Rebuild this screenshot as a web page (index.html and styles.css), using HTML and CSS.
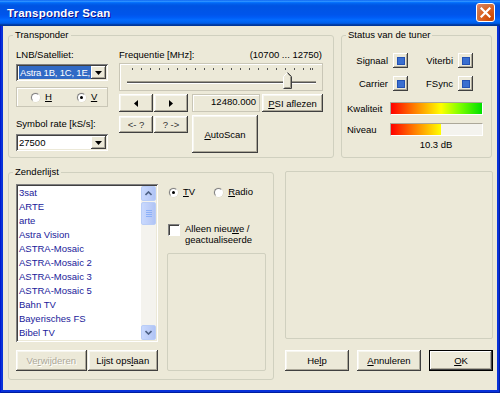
FILE: index.html
```html
<!DOCTYPE html>
<html lang="nl">
<head>
  <meta charset="UTF-8" />
  <title>Transponder Scan</title>
  <link rel="stylesheet" href="styles.css">
</head>
<body>
  <div class="window">
    <div class="titlebar">
      <span class="title">Transponder Scan</span>
      <span class="close">
        <svg width="11" height="11" viewBox="0 0 11 11"><path d="M1.5 1.5 L9.5 9.5 M9.5 1.5 L1.5 9.5" stroke="#fff" stroke-width="2.2" stroke-linecap="square"/></svg>
      </span>
    </div>

    <div class="client">
      <div class="row-top">
        <fieldset class="group transponder">
          <legend>Transponder</legend>
          <div class="tp-inner">
            <div class="tp-left">
              <div class="lbl">LNB/Satelliet:</div>
              <div class="combo combo-lnb">
                <span class="combo-text"><span class="sel">Astra 1B, 1C, 1E,</span></span>
                <span class="combo-btn"><svg width="7" height="4" viewBox="0 0 7 4"><path d="M0 0 H7 L3.5 4 Z" fill="#000"/></svg></span>
              </div>
              <div class="pol-frame">
                <span class="radio"><span class="dot-box"></span><span><u>H</u></span></span>
                <span class="radio"><span class="dot-box on"></span><span><u>V</u></span></span>
              </div>
              <div class="lbl lbl-sr">Symbol rate [kS/s]:</div>
              <div class="combo combo-sr">
                <span class="combo-text">27500</span>
                <span class="combo-btn"><svg width="7" height="4" viewBox="0 0 7 4"><path d="M0 0 H7 L3.5 4 Z" fill="#000"/></svg></span>
              </div>
            </div>

            <div class="tp-right">
              <div class="freq-head">
                <span>Frequentie [MHz]:</span>
                <span>(10700 ... 12750)</span>
              </div>
              <div class="trackbar">
                <svg width="202" height="26" viewBox="0 0 202 26">
                  <g stroke="#555" stroke-width="1">
                    <path d="M12.5 4v2 M21.5 4v2 M30.5 4v2 M39.5 4v2 M48.5 4v2 M57.5 4v2 M66.5 4v2 M75.5 4v2 M84.5 4v2 M93.5 4v2 M102.5 4v2 M111.5 4v2 M120.5 4v2 M129.5 4v2 M138.5 4v2 M147.5 4v2 M156.5 4v2 M165.5 4v2 M174.5 4v2 M183.5 4v2 M190.5 4v2 M192.5 4v2"/>
                  </g>
                  <rect x="7" y="17" width="189" height="1" fill="#9d9a8b"/>
                  <rect x="7" y="18" width="189" height="1" fill="#555"/>
                  <rect x="7" y="19" width="189" height="1" fill="#ffffff"/>
                  <path d="M163.5 24.5 V12.5 L167.5 8.5 L171.5 12.5 V24.5 Z" fill="#ece9d8" stroke="#fff"/>
                  <path d="M167.5 8.5 L171.5 12.5 V24.5 H163.5" fill="none" stroke="#404040"/>
                  <path d="M167.5 9.5 L170.5 12.5 V23.5 H164.5" fill="none" stroke="#9d9a8b"/>
                </svg>
              </div>
              <div class="freq-row">
                <button class="btn btn-step"><svg width="4" height="7" viewBox="0 0 4 7"><path d="M4 0 V7 L0 3.5 Z" fill="#000"/></svg></button>
                <button class="btn btn-step"><svg width="4" height="7" viewBox="0 0 4 7"><path d="M0 0 V7 L4 3.5 Z" fill="#000"/></svg></button>
                <div class="freq-value">12480.000</div>
                <button class="btn btn-psi"><span><u>P</u>SI aflezen</span></button>
              </div>
              <div class="scan-row">
                <div class="seek">
                  <button class="btn btn-seek">&lt;- ?</button>
                  <button class="btn btn-seek">? -&gt;</button>
                </div>
                <button class="btn btn-auto"><span><u>A</u>utoScan</span></button>
              </div>
            </div>
          </div>
        </fieldset>

        <fieldset class="group status">
          <legend>Status van de tuner</legend>
          <div class="st-inner">
            <div class="leds">
              <div class="led-cell">Signaal <span class="led"><span class="led-on"></span></span></div>
              <div class="led-cell">Viterbi <span class="led"><span class="led-on"></span></span></div>
              <div class="led-cell">Carrier <span class="led"><span class="led-on"></span></span></div>
              <div class="led-cell">FSync <span class="led"><span class="led-on"></span></span></div>
            </div>
            <div class="meter">
              <span class="meter-lbl">Kwaliteit</span>
              <span class="bar"><span class="bar-fill" style="width: 100%"></span></span>
            </div>
            <div class="meter">
              <span class="meter-lbl">Niveau</span>
              <span class="bar"><span class="bar-fill" style="width: 55%"></span></span>
            </div>
            <div class="db">10.3 dB</div>
          </div>
        </fieldset>
      </div>

      <div class="row-bottom">
        <fieldset class="group zender">
          <legend>Zenderlijst</legend>
          <div class="zl-inner">
            <div class="zl-left">
              <div class="listbox">
                <ul class="items">
                  <li>3sat</li>
                  <li>ARTE</li>
                  <li>arte</li>
                  <li>Astra Vision</li>
                  <li>ASTRA-Mosaic</li>
                  <li>ASTRA-Mosaic 2</li>
                  <li>ASTRA-Mosaic 3</li>
                  <li>ASTRA-Mosaic 5</li>
                  <li>Bahn TV</li>
                  <li>Bayerisches FS</li>
                  <li>Bibel TV</li>
                </ul>
                <div class="vscroll">
                  <span class="sb-btn">
                    <svg width="7" height="5" viewBox="0 0 7 5"><path d="M0.5 4 L3.5 1 L6.5 4" fill="none" stroke="#4d6185" stroke-width="1.6"/></svg>
                  </span>
                  <span class="sb-thumb">
                    <svg width="6" height="7" viewBox="0 0 6 7"><path d="M0 0.5h6 M0 2.5h6 M0 4.5h6 M0 6.5h6" stroke="#8cb0f8"/></svg>
                  </span>
                  <span class="sb-track"></span>
                  <span class="sb-btn">
                    <svg width="7" height="5" viewBox="0 0 7 5"><path d="M0.5 1 L3.5 4 L6.5 1" fill="none" stroke="#4d6185" stroke-width="1.6"/></svg>
                  </span>
                </div>
              </div>
              <div class="zl-buttons">
                <button class="btn btn-list" disabled><span>Ve<u>r</u>wijderen</span></button>
                <button class="btn btn-list"><span>Lijst ops<u>l</u>aan</span></button>
              </div>
            </div>

            <div class="zl-right">
              <div class="type-row">
                <span class="radio"><span class="dot-box on"></span><span><u>T</u>V</span></span>
                <span class="radio"><span class="dot-box"></span><span><u>R</u>adio</span></span>
              </div>
              <div class="check-row">
                <span class="check"></span>
                <span class="check-lbl">Alleen nieu<u>w</u>e /<br>geactualiseerde</span>
              </div>
              <div class="etched zl-frame"></div>
            </div>
          </div>
        </fieldset>

        <div class="side">
          <div class="etched side-frame"></div>
          <div class="dlg-buttons">
            <button class="btn btn-dlg"><span>He<u>l</u>p</span></button>
            <button class="btn btn-dlg"><span><u>A</u>nnuleren</span></button>
            <button class="btn btn-dlg btn-default"><span><u>O</u>K</span></button>
          </div>
        </div>
      </div>
    </div>
  </div>
</body>
</html>
```

FILE: styles.css
```css
* {
  box-sizing: border-box;
}

body {
  margin: 0;
  width: 500px;
  height: 393px;
  overflow: hidden;
  font-family: "Liberation Sans", Arial, sans-serif;
  font-size: 9.5px;
  color: #000;
  background: #0831d9;
}

.window {
  width: 500px;
  height: 393px;
  display: flex;
  flex-direction: column;
  background: #0831d9;
  box-shadow: inset 1px 0 #0019cf, inset -1px 0 #001ea0, inset 0 -1px #001ea0;
  padding: 0 3px 3px 3px;
}

/* title bar */
.titlebar {
  height: 26px;
  margin: 0 -3px;
  display: flex;
  align-items: center;
  justify-content: space-between;
  padding: 0 5px 1px 7px;
  background: linear-gradient(to bottom, #0058ee 0%, #3593ff 4%, #288eff 6%, #127dff 8%, #036ffc 10%, #0262ee 14%, #0057e5 20%, #0054e3 24%, #0055eb 56%, #005bf5 66%, #026afe 76%, #0062ef 86%, #0052d6 92%, #0040ab 94%, #003092 100%);
}

.title {
  color: #fff;
  font-weight: bold;
  font-size: 11.5px;
  letter-spacing: 0.2px;
  text-shadow: 1px 1px #0f1089;
}

.close {
  width: 19px;
  height: 19px;
  border: 1px solid #fff;
  border-radius: 3px;
  display: flex;
  align-items: center;
  justify-content: center;
  background: radial-gradient(circle at 85% 85%, #cc4600 0%, #dc6527 55%, #cd7546 70%, #e27d5e 90%);
  background-color: #e0542c;
}

/* client area */
.client {
  flex: 1;
  background: #ece9d8;
  padding: 3px 4px 0 5px;
  display: flex;
  flex-direction: column;
  gap: 8px;
}

.row-top {
  display: flex;
  gap: 7px;
  height: 129px;
}

.row-bottom {
  display: flex;
  gap: 11px;
  height: 214px;
}

.group {
  margin: 0;
  padding: 0;
  min-width: 0;
  border: 1px solid #d0d0bf;
  border-radius: 3px;
}

.group legend {
  margin-left: 4px;
  padding: 0 2px;
  line-height: 12px;
  color: #000;
}

.etched {
  border: 1px solid #d0d0bf;
  border-radius: 2px;
}

/* classic 3D button */
.btn {
  margin: 0;
  padding: 0;
  border: none;
  background: #ece9d8;
  font: inherit;
  color: #000;
  display: flex;
  align-items: center;
  justify-content: center;
  box-shadow: inset -1px -1px #404040, inset 1px 1px #fff, inset -2px -2px #aca899, inset 2px 2px #f7f6ef;
}

.btn[disabled] {
  color: #aca899;
  text-shadow: 1px 1px #fff;
}

.btn u {
  text-underline-offset: 1px;
}

/* transponder group */
.transponder {
  width: 326px;
}

.tp-inner {
  display: flex;
  gap: 11px;
  padding: 8px 9px 0 7px;
}

.tp-left {
  width: 92px;
  display: flex;
  flex-direction: column;
}

.lbl {
  line-height: 12px;
  height: 12px;
}

.combo {
  height: 17px;
  background: #fff;
  display: flex;
  align-items: stretch;
  padding: 2px;
  box-shadow: inset 1px 1px #808080, inset -1px -1px #fff, inset 2px 2px #404040, inset -2px -2px #ece9d8;
}

.combo-lnb {
  margin-top: 3px;
}

.combo-text {
  flex: 1;
  overflow: hidden;
  white-space: nowrap;
  line-height: 13px;
  padding-left: 1px;
}

.sel {
  background: #316ac5;
  color: #fff;
  padding: 0 1px;
  display: inline-block;
  height: 13px;
  letter-spacing: -0.2px;
}

.combo-btn {
  width: 15px;
  background: #ece9d8;
  display: flex;
  align-items: center;
  justify-content: center;
  box-shadow: inset -1px -1px #404040, inset 1px 1px #fff, inset -2px -2px #aca899;
}

.pol-frame {
  margin-top: 6px;
  height: 20px;
  border: 1px solid #c9c6b6;
  box-shadow: inset 1px 1px #fff;
  display: flex;
  align-items: center;
  padding-left: 14px;
  gap: 25px;
}

.radio {
  display: inline-flex;
  align-items: center;
  gap: 5px;
  line-height: 12px;
}

.dot-box {
  width: 9px;
  height: 9px;
  border-radius: 50%;
  background: #fff;
  border: 1px solid;
  border-color: #808080 #fff #fff #808080;
  box-shadow: 0 0 0 0.5px #d8d5c6;
  display: flex;
  align-items: center;
  justify-content: center;
}

.dot-box.on::after {
  content: "";
  width: 3px;
  height: 3px;
  border-radius: 50%;
  background: #000;
}

.lbl-sr {
  margin-top: 11px;
}

.combo-sr {
  margin-top: 4px;
}

.tp-right {
  width: 204px;
  display: flex;
  flex-direction: column;
}

.freq-head {
  display: flex;
  justify-content: space-between;
  line-height: 12px;
  padding-right: 1px;
}

.trackbar {
  margin-top: 2px;
  height: 28px;
  border: 1px solid #c9c6b6;
  box-shadow: inset 1px 1px #fff;
}

.trackbar svg {
  display: block;
}

.freq-row {
  margin-top: 3px;
  height: 18px;
  display: flex;
}

.btn-step {
  width: 34px;
  margin-right: 0;
}

.btn-step + .btn-step {
  margin-left: 1px;
}

.freq-value {
  width: 68px;
  margin-left: 4px;
  border: 1px solid #c9c6b6;
  box-shadow: inset 1px 1px #fff;
  text-align: right;
  padding: 1px 3px 0 0;
  line-height: 12px;
}

.btn-psi {
  margin-left: 2px;
  flex: 1;
}

.scan-row {
  margin-top: 3px;
  display: flex;
  gap: 4px;
}

.seek {
  display: flex;
  gap: 1px;
  align-items: flex-start;
  padding-top: 1px;
}

.btn-seek {
  width: 34px;
  height: 17px;
  color: #333;
}

.btn-auto {
  width: 66px;
  height: 38px;
}

/* status group */
.status {
  width: 151px;
}

.st-inner {
  padding: 12px 8px 0 5px;
}

.leds {
  display: grid;
  grid-template-columns: 61px 65px;
  row-gap: 8px;
}

.led-cell {
  display: flex;
  justify-content: flex-end;
  align-items: center;
  gap: 5px;
}

.led {
  width: 15px;
  height: 15px;
  display: flex;
  align-items: center;
  justify-content: center;
  background: #ece9d8;
  box-shadow: inset -1px -1px #404040, inset 1px 1px #fff, inset -2px -2px #aca899;
}

.led-on {
  width: 8px;
  height: 8px;
  background: #3a6fd0;
  border: 1px solid #2452b3;
}

.meter {
  display: flex;
  align-items: center;
  justify-content: space-between;
  margin-top: 11px;
  height: 13px;
}

.meter + .meter {
  margin-top: 8px;
}

.bar {
  width: 93px;
  height: 13px;
  border: 1px solid;
  border-color: #aca899 #fff #fff #aca899;
  background: #f4f3ee;
  display: flex;
}

.bar-fill {
  height: 100%;
  background: linear-gradient(to right, #ff0000 0%, #ff7a00 25%, #ffff00 55%, #80ff00 75%, #00e000 100%);
  background-size: 91px 100%;
}

.db {
  margin-left: 42px;
  text-align: center;
  line-height: 12px;
  margin-top: 3px;
}

/* zenderlijst */
.zender {
  width: 266px;
}

.zl-inner {
  display: flex;
  gap: 9px;
  padding: 6px 7px 0 7px;
}

.zl-left {
  width: 142px;
  display: flex;
  flex-direction: column;
}

.listbox {
  height: 158px;
  background: #fff;
  display: flex;
  padding: 2px;
  box-shadow: inset 1px 1px #808080, inset -1px -1px #fff, inset 2px 2px #404040, inset -2px -2px #ece9d8;
}

.items {
  list-style: none;
  margin: 0;
  padding: 0 0 0 1px;
  flex: 1;
  overflow: hidden;
  color: #1a1a9a;
}

.items li {
  line-height: 14px;
  height: 14px;
  white-space: nowrap;
}

.vscroll {
  width: 15px;
  display: flex;
  flex-direction: column;
  background: #f4f3ee;
}

.sb-btn,
.sb-thumb {
  height: 15px;
  display: flex;
  align-items: center;
  justify-content: center;
  border: 1px solid #b9cdf7;
  border-radius: 2px;
  background: linear-gradient(to right, #c9d9fe, #bccdf8 60%, #b0c4f5);
}

.sb-thumb {
  height: 23px;
  margin-top: 1px;
}

.sb-track {
  flex: 1;
}

.zl-buttons {
  margin-top: 8px;
  display: flex;
  gap: 1px;
}

.btn-list {
  height: 21px;
  flex: 1;
}

.zl-right {
  width: 99px;
  display: flex;
  flex-direction: column;
}

.type-row {
  display: flex;
  gap: 19px;
  padding-left: 2px;
  margin-top: 1px;
  height: 14px;
  align-items: center;
}

.check-row {
  margin-top: 24px;
  display: flex;
  gap: 5px;
  padding-left: 1px;
}

.check {
  width: 12px;
  height: 12px;
  margin-top: 1px;
  background: #fff;
  border: 1px solid;
  border-color: #808080 #fff #fff #808080;
  box-shadow: inset 1px 1px #404040;
}

.check-lbl {
  line-height: 11px;
}

.zl-frame {
  margin-top: 8px;
  height: 118px;
}

/* right side */
.side {
  width: 208px;
  display: flex;
  flex-direction: column;
  padding-top: 5px;
}

.side-frame {
  height: 168px;
}

.dlg-buttons {
  margin-top: 11px;
  display: flex;
  justify-content: space-between;
}

.btn-dlg {
  width: 64px;
  height: 21px;
}

.btn-default {
  box-shadow: inset 0 0 0 1px #000, inset -2px -2px #404040, inset 2px 2px #fff, inset -3px -3px #aca899;
}
```
